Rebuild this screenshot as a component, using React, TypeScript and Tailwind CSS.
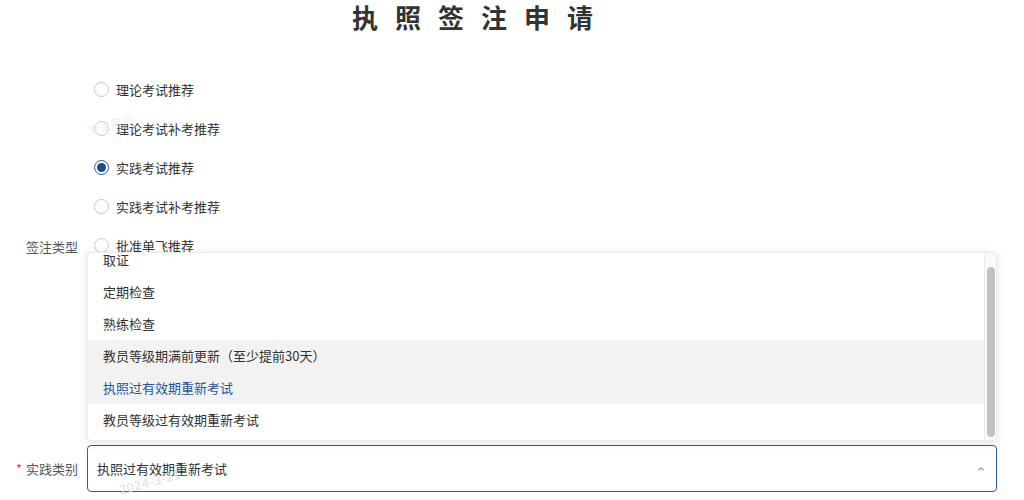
import React from "react";

const font = { fontFamily: '"Noto Sans CJK SC", "Noto Sans", sans-serif' };

const radios = [
  "理论考试推荐",
  "理论考试补考推荐",
  "实践考试推荐",
  "实践考试补考推荐",
  "批准单飞推荐",
  "批准单飞补考推荐",
  "执照签注推荐",
  "教员等级推荐",
  "其他",
];

const options = [
  "取证",
  "定期检查",
  "熟练检查",
  "教员等级期满前更新（至少提前30天）",
  "执照过有效期重新考试",
  "教员等级过有效期重新考试",
];

const Radio = ({ label, checked, hidden }: { label: string; checked?: boolean; hidden?: boolean }) => (
  <label className={`flex h-[39px] items-center gap-[7px] pl-[7px] ${hidden ? "invisible" : ""}`}>
    {checked ? (
      <span className="flex h-[15px] w-[15px] items-center justify-center rounded-full border border-[#2a5595]">
        <span className="h-[9px] w-[9px] rounded-full bg-[#1f4b8e]" />
      </span>
    ) : (
      <span className="h-[15px] w-[15px] rounded-full border border-[#c8c8c8] bg-white" />
    )}
    <span className="text-[13px] text-[#333]">{label}</span>
  </label>
);

export default function App() {
  return (
    <div className="relative h-[500px] w-[1024px] overflow-hidden bg-white" style={font}>
      <div className="flex justify-center pr-[62px]">
        <h1 className="text-[26px] font-bold leading-[34px] tracking-[17px] text-[#333]">执照签注申请</h1>
      </div>

      <div className="mt-[36px] flex flex-col">
        {/* 签注类型 */}
        <div className="flex items-start">
          <div className="mt-[168px] w-[87px] pr-[9px] text-right text-[13px] leading-[18px] text-[#555]">签注类型</div>
          <div className="flex flex-col">
            {radios.map((r, i) => (
              // options below the fifth sit under the open dropdown
              <Radio key={r} label={r} checked={i === 2} hidden={i > 4} />
            ))}
          </div>
        </div>

        {/* 实践类别 */}
        <div className="mt-[24px] flex items-center">
          <div className="w-[87px] pr-[9px] text-right text-[13px] text-[#555]">
            <span className="mr-[4px] text-[#e0443a]">*</span>实践类别
          </div>
          <div className="relative">
            <div className="flex h-[47px] w-[910px] items-center justify-between rounded-[4px] border border-[#2f5d99] bg-white pl-[9px] pr-[10px]">
              <span className="text-[13px] text-[#333]">执照过有效期重新考试</span>
              <svg width="10" height="10" viewBox="0 0 10 10" fill="none">
                <path d="M2.5 6.2 L5 3.8 L7.5 6.2" stroke="#999" strokeWidth="1.2" />
              </svg>
            </div>

            {/* dropdown */}
            <div className="absolute bottom-full left-0 mb-[4px] flex h-[189px] w-[910px] overflow-hidden rounded-[4px] border border-[#ebebeb] bg-white shadow-[0_2px_10px_rgba(0,0,0,0.12)]">
              <div className="-mt-[9px] flex flex-1 flex-col">
                {options.map((o, i) => (
                  <div
                    key={o}
                    className={`flex h-[32px] shrink-0 items-center px-[15px] text-[13px] ${
                      i === 3 || i === 4 ? "bg-[#f2f2f2]" : ""
                    } ${i === 4 ? "text-[#2a5595]" : "text-[#333]"}`}
                  >
                    {o}
                  </div>
                ))}
              </div>
              <div className="flex w-[12px] border-l border-[#ebebeb] bg-[#fafafa] pb-[3px] pt-[14px]">
                <div className="mx-auto w-[8px] rounded-full bg-[#c1c1c1]" />
              </div>
            </div>
          </div>
        </div>
      </div>

      {/* watermarks */}
      <span className="pointer-events-none absolute left-[86px] top-[116px] -rotate-[15deg] text-[12px] text-[#e8e8e8]/70">
        测试用户
      </span>
      <span className="pointer-events-none absolute left-[118px] top-[472px] -rotate-[15deg] text-[13px] font-semibold text-[#dddddd]/70">
        2024-3-21
      </span>
    </div>
  );
}
